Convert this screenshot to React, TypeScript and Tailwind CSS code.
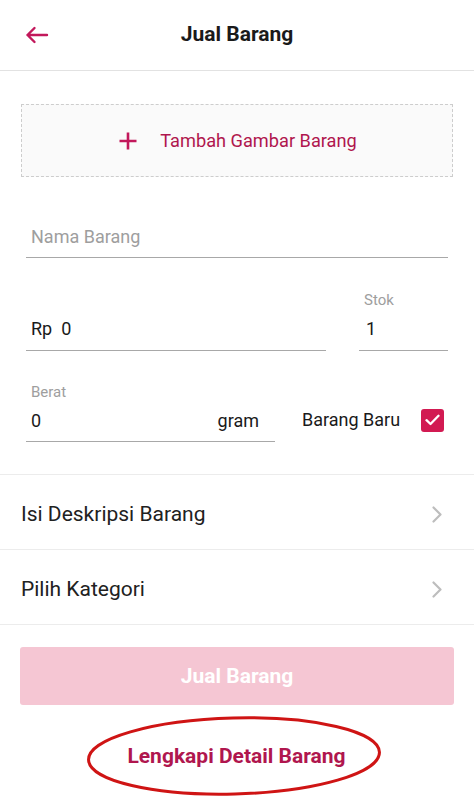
import React from "react";

const font = { fontFamily: "Roboto, 'Noto Sans', Arial, sans-serif" };

function Chevron() {
  return (
    <svg width="12" height="17" viewBox="0 0 12 17" fill="none">
      <path d="M2.5 1.5 L9.5 8.5 L2.5 15.5" stroke="#bdbdbd" strokeWidth="2.2" strokeLinecap="round" strokeLinejoin="round" />
    </svg>
  );
}

export default function App() {
  return (
    <div className="w-[474px] h-[808px] bg-white overflow-hidden text-[#212121]" style={font}>
      {/* Header */}
      <div className="relative h-[71px] flex items-center justify-center border-b border-[#e2e2e2]">
        <div className="absolute left-[25px] top-[26px]">
          <svg width="24" height="18" viewBox="0 0 24 18" fill="none">
            <path d="M22 9 H2.5 M9.5 2 L2.5 9 L9.5 16" stroke="#c2185b" strokeWidth="2.4" strokeLinecap="round" strokeLinejoin="round" />
          </svg>
        </div>
        <span className="text-[21px] font-bold leading-[24px] text-[#1a1a1a] mb-[2px]">Jual Barang</span>
      </div>

      <div className="px-[21px]">
        {/* Add image */}
        <div className="mt-[33px] h-[73px] border-[1.5px] border-dashed border-[#cdcdcd] bg-[#fafafa] flex items-center justify-center">
          <svg width="18" height="18" viewBox="0 0 18 18" className="mr-[23px] ml-[2px]">
            <path d="M9 0.5 V17.5 M0.5 9 H17.5" stroke="#c2185b" strokeWidth="2.6" />
          </svg>
          <span className="text-[18.2px] leading-[24px] text-[#b0164e]">Tambah Gambar Barang</span>
        </div>

        <div className="px-[5px]">
          {/* Nama Barang */}
          <div className="mt-[48px] pl-[5px] pb-[8px] border-b-[1.5px] border-[#a8a8a8]">
            <span className="block text-[18px] leading-[24px] text-[#9e9e9e]">Nama Barang</span>
          </div>

          {/* Price + Stok */}
          <div className="mt-[32px] flex items-end justify-between">
            <div className="w-[300px] pl-[5px] pb-[9px] border-b-[1.5px] border-[#a8a8a8]">
              <span className="block text-[18px] leading-[24px] text-[#1a1a1a]">Rp&nbsp;&nbsp;0</span>
            </div>
            <div className="w-[89px]">
              <span className="block pl-[5px] text-[15px] leading-[20px] text-[#9e9e9e]">Stok</span>
              <div className="mt-[7px] pl-[7px] pb-[9px] border-b-[1.5px] border-[#a8a8a8]">
                <span className="block text-[18px] leading-[24px] text-[#1a1a1a]">1</span>
              </div>
            </div>
          </div>

          {/* Berat + Barang Baru */}
          <div className="mt-[31px] flex items-end">
            <div className="w-[249px]">
              <span className="block pl-[5px] text-[15px] leading-[20px] text-[#9e9e9e]">Berat</span>
              <div className="mt-[7px] pl-[5px] pr-[16px] pb-[8px] border-b-[1.5px] border-[#a8a8a8] flex justify-between">
                <span className="text-[18px] leading-[24px] text-[#1a1a1a]">0</span>
                <span className="text-[18px] leading-[24px] text-[#1a1a1a]">gram</span>
              </div>
            </div>
            <div className="ml-[27px] mb-[10px] flex items-center">
              <span className="text-[18px] leading-[24px] text-[#1a1a1a]">Barang Baru</span>
              <div className="ml-[21px] w-[23px] h-[23px] rounded-[3px] bg-[#d21a52] flex items-center justify-center">
                <svg width="15" height="12" viewBox="0 0 15 12" fill="none">
                  <path d="M1.5 6.2 L5.5 10 L13.5 1.8" stroke="white" strokeWidth="2.3" strokeLinecap="round" strokeLinejoin="round" />
                </svg>
              </div>
            </div>
          </div>
        </div>
      </div>

      {/* Rows */}
      <div className="mt-[32px] border-t border-[#ececec]">
        <div className="h-[75px] pl-[21px] pr-[31px] pt-[4px] flex items-center justify-between border-b border-[#ececec]">
          <span className="text-[21px] leading-[26px] text-[#212121]">Isi Deskripsi Barang</span>
          <Chevron />
        </div>
        <div className="h-[75px] pl-[21px] pr-[31px] pt-[4px] flex items-center justify-between border-b border-[#ececec]">
          <span className="text-[21px] leading-[26px] text-[#212121]">Pilih Kategori</span>
          <Chevron />
        </div>
      </div>

      {/* Button */}
      <div className="px-[20px] mt-[22px]">
        <div className="h-[58px] rounded-[3px] bg-[#f5c6d3] flex items-center justify-center">
          <span className="text-[21px] font-bold leading-[24px] text-white">Jual Barang</span>
        </div>
      </div>

      {/* Lengkapi */}
      <div className="relative mt-[12px] h-[78px] flex items-center justify-center">
        <span className="text-[21px] font-bold leading-[24px] text-[#b0164e] mr-[1px]">Lengkapi Detail Barang</span>
        <svg className="absolute left-[84px] top-[-2px]" width="300" height="82" viewBox="0 0 300 82" fill="none">
          <ellipse cx="150" cy="41" rx="145.5" ry="38" stroke="#cf1414" strokeWidth="3" transform="rotate(-1.5 150 41)" />
        </svg>
      </div>
    </div>
  );
}
